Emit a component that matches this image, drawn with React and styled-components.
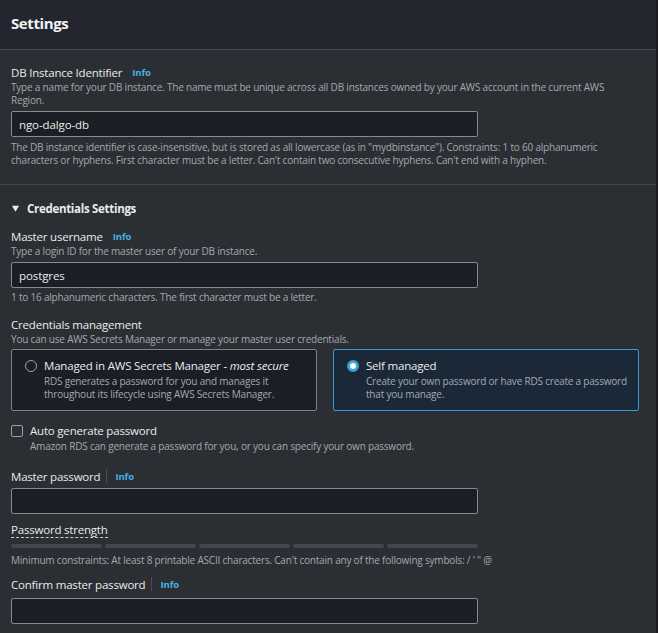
import React from "react";
import styled, { createGlobalStyle } from "styled-components";

const Global = createGlobalStyle`
  html, body { margin: 0; padding: 0; background: #2b2e33; }
  body { font-family: "Open Sans", "Noto Sans", sans-serif; color: #d1d5db; }
  * { box-sizing: border-box; }
`;

const Shell = styled.div`
  display: flex;
  width: 658px;
  height: 633px;
  overflow: hidden;
`;

const Panel = styled.div`
  flex: 1;
  min-width: 0;
  background: #2b2e33;
  display: flex;
  flex-direction: column;
`;

const Edge = styled.div`
  width: 2px;
  flex: none;
  background: #1b1d21;
`;

const Header = styled.div`
  flex: none;
  height: 50px;
  background: #23262e;
  border-bottom: 1px solid #4a4e54;
  display: flex;
  align-items: center;
  padding: 0 11px 4px;
`;

const Title = styled.h2`
  margin: 0;
  font-size: 15px;
  font-weight: 700;
  color: #f2f3f3;
  letter-spacing: -0.4px;
`;

const Section = styled.div`
  flex: none;
  padding: ${(p) => p.$pad};
  border-bottom: ${(p) => (p.$divider ? "1px solid #414449" : "none")};
  display: flex;
  flex-direction: column;
`;

const Field = styled.div`
  display: flex;
  flex-direction: column;
  margin-top: ${(p) => p.$mt || 0}px;
`;

const LabelRow = styled.div`
  display: flex;
  align-items: center;
  height: 18px;
`;

const Label = styled.span`
  font-size: 11.5px;
  letter-spacing: -0.2px;
  color: #e9ebed;
`;

const Info = styled.span`
  font-size: 9.5px;
  font-weight: 700;
  letter-spacing: -0.1px;
  color: #42b4e6;
  margin-left: ${(p) => (p.$sep ? 0 : 10)}px;
`;

const Sep = styled.span`
  width: 1px;
  height: 14px;
  background: #4a4e54;
  margin: 0 8px 0 6px;
`;

const Desc = styled.div`
  font-size: 10px;
  line-height: 13px;
  letter-spacing: -0.2px;
  color: #a4a9b0;
  max-width: ${(p) => p.$max || 640}px;
  margin-bottom: ${(p) => p.$mb || 0}px;
`;

const Input = styled.div`
  width: 467px;
  height: 26px;
  margin-top: ${(p) => p.$mt ?? 4}px;
  margin-bottom: ${(p) => p.$mb ?? 4}px;
  background: #1b1e25;
  border: 1px solid #868b92;
  border-radius: 2px;
  padding: 0 7px;
  display: flex;
  align-items: center;
  font-size: 11.5px;
  letter-spacing: -0.1px;
  color: #e9ebed;
`;

const ExpandHead = styled.div`
  display: flex;
  align-items: center;
  gap: 7px;
  font-size: 11.5px;
  font-weight: 700;
  letter-spacing: -0.3px;
  color: #e9ebed;
  height: 18px;
`;

const Caret = styled.svg`
  width: 9px;
  height: 9px;
`;

const Cards = styled.div`
  display: grid;
  grid-template-columns: 306px 306px;
  column-gap: 16px;
  margin-top: 3px;
`;

const Card = styled.div`
  height: 62px;
  border: 1px solid ${(p) => (p.$on ? "#3d9ad6" : "#7d8188")};
  background: ${(p) => (p.$on ? "#1a2838" : "#1b1e25")};
  border-radius: 2px;
  padding: 7px 10px 0 13px;
  display: flex;
  gap: 7px;
`;

const Radio = styled.span`
  flex: none;
  width: 12px;
  height: 12px;
  margin-top: 3px;
  border-radius: 50%;
  border: ${(p) => (p.$on ? "3.5px solid #3f9fd8" : "1px solid #9ba0a6")};
  background: ${(p) => (p.$on ? "#ffffff" : "transparent")};
`;

const CardBody = styled.div`
  display: flex;
  flex-direction: column;
  white-space: nowrap;
`;

const CardTitle = styled.span`
  font-size: 11.5px;
  letter-spacing: -0.2px;
  color: #e9ebed;
  line-height: 18px;
  em { font-style: italic; }
`;

const CardDesc = styled.span`
  font-size: 10px;
  line-height: 13px;
  letter-spacing: -0.2px;
  color: #a4a9b0;
`;

const CheckRow = styled.div`
  display: flex;
  gap: 7px;
  margin-top: 11px;
`;

const Box = styled.span`
  flex: none;
  width: 12px;
  height: 12px;
  margin-top: 3px;
  border: 1px solid #9ba0a6;
  border-radius: 2px;
`;

const Underlined = styled.span`
  font-size: 11.5px;
  letter-spacing: -0.2px;
  color: #e9ebed;
  border-bottom: 1px dashed #c8ccd1;
  line-height: 15px;
`;

const Meter = styled.div`
  display: grid;
  grid-template-columns: repeat(5, 1fr);
  gap: 3px;
  width: 467px;
  margin: 5px 0 6px;
`;

const Segment = styled.span`
  height: 4px;
  border-radius: 2px;
  background: #434850;
`;

export default function App() {
  return (
    <>
      <Global />
      <Shell>
        <Panel>
          <Header>
            <Title>Settings</Title>
          </Header>

          <Section $divider $pad="13px 11px 17px">
            <LabelRow>
              <Label>DB Instance Identifier</Label>
              <Info>Info</Info>
            </LabelRow>
            <Desc $max={612}>
              Type a name for your DB instance. The name must be unique across all DB instances owned by your AWS account in the current AWS Region.
            </Desc>
            <Input>ngo-dalgo-db</Input>
            <Desc $max={625}>
              The DB instance identifier is case-insensitive, but is stored as all lowercase (as in "mydbinstance"). Constraints: 1 to 60 alphanumeric characters or hyphens. First character must be a letter. Can't contain two consecutive hyphens. Can't end with a hyphen.
            </Desc>
          </Section>

          <Section $pad="14px 11px 0">
            <ExpandHead>
              <Caret viewBox="0 0 10 10">
                <path d="M1 2h8L5 8.5z" fill="#e9ebed" />
              </Caret>
              Credentials Settings
            </ExpandHead>

            <Field $mt={10}>
              <LabelRow>
                <Label>Master username</Label>
                <Info>Info</Info>
              </LabelRow>
              <Desc>Type a login ID for the master user of your DB instance.</Desc>
              <Input $mb={3}>postgres</Input>
              <Desc>1 to 16 alphanumeric characters. The first character must be a letter.</Desc>
            </Field>

            <Field $mt={11}>
              <LabelRow>
                <Label>Credentials management</Label>
              </LabelRow>
              <Desc>You can use AWS Secrets Manager or manage your master user credentials.</Desc>
              <Cards>
                <Card>
                  <Radio />
                  <CardBody>
                    <CardTitle>
                      Managed in AWS Secrets Manager - <em>most secure</em>
                    </CardTitle>
                    <CardDesc>RDS generates a password for you and manages it</CardDesc>
                    <CardDesc>throughout its lifecycle using AWS Secrets Manager.</CardDesc>
                  </CardBody>
                </Card>
                <Card $on>
                  <Radio $on />
                  <CardBody>
                    <CardTitle>Self managed</CardTitle>
                    <CardDesc>Create your own password or have RDS create a password</CardDesc>
                    <CardDesc>that you manage.</CardDesc>
                  </CardBody>
                </Card>
              </Cards>
            </Field>

            <CheckRow>
              <Box />
              <CardBody>
                <CardTitle>Auto generate password</CardTitle>
                <CardDesc>Amazon RDS can generate a password for you, or you can specify your own password.</CardDesc>
              </CardBody>
            </CheckRow>

            <Field $mt={14}>
              <LabelRow>
                <Label>Master password</Label>
                <Sep />
                <Info $sep>Info</Info>
              </LabelRow>
              <Input $mt={3} $mb={7} />
            </Field>

            <Field>
              <LabelRow>
                <Underlined>Password strength</Underlined>
              </LabelRow>
              <Meter>
                <Segment />
                <Segment />
                <Segment />
                <Segment />
                <Segment />
              </Meter>
              <Desc>Minimum constraints: At least 8 printable ASCII characters. Can't contain any of the following symbols: / ' " @</Desc>
            </Field>

            <Field $mt={8}>
              <LabelRow>
                <Label>Confirm master password</Label>
                <Sep />
                <Info $sep>Info</Info>
              </LabelRow>
              <Input $mt={5} />
            </Field>
          </Section>
        </Panel>
        <Edge />
      </Shell>
    </>
  );
}
